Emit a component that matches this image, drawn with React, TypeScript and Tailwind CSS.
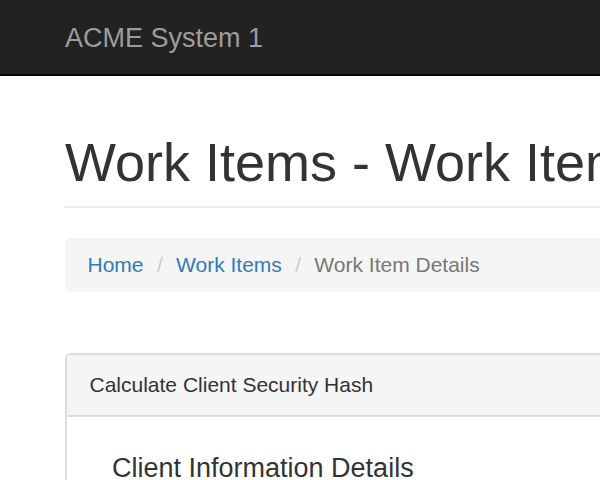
export default function App() {
  return (
    <div className="w-[600px] h-[480px] overflow-hidden bg-white font-['Liberation_Sans',Arial,sans-serif] text-[#333333]">
      <nav className="h-[76px] bg-[#222222] border-b-2 border-[#080808]">
        <div className="pl-[65px] pt-[22.5px]">
          <a href="#" className="text-[27px] leading-[30px] text-[#9d9d9d] whitespace-nowrap">
            ACME System 1
          </a>
        </div>
      </nav>

      <div className="w-[1100px] pl-[65px]">
        <div className="mt-[57px] pb-[13.5px] border-b-2 border-[#eeeeee]">
          <h1 className="text-[54px] leading-[59.4px] font-normal whitespace-nowrap">
            Work Items - Work Item Details
          </h1>
        </div>

        <ol className="mt-[30px] py-[12px] px-[22.5px] bg-[#f5f5f5] rounded-[6px] text-[21px] leading-[30px] whitespace-nowrap">
          <li className="inline-block">
            <a href="#" className="text-[#337ab7]">Home</a>
          </li>{" "}
          <li className="inline-block">
            <span className="px-[7.5px] text-[#cccccc]">/&nbsp;</span>
            <a href="#" className="text-[#337ab7]">Work Items</a>
          </li>{" "}
          <li className="inline-block text-[#777777]">
            <span className="px-[7.5px] text-[#cccccc]">/&nbsp;</span>
            Work Item Details
          </li>
        </ol>

        <div className="mt-[61px] border-2 border-[#dddddd] rounded-[6px]">
          <div className="bg-[#f5f5f5] border-b-2 border-[#dddddd] rounded-t-[4px] py-[15px] px-[22.5px]">
            <h3 className="text-[21px] leading-[30px] font-normal">Calculate Client Security Hash</h3>
          </div>
          <div className="p-[22.5px]">
            <div className="pl-[22.5px]">
              <h4 className="mt-[15px] text-[27px] leading-[29.7px] font-normal">Client Information Details</h4>
              <div className="h-[200px]" />
            </div>
          </div>
        </div>
      </div>
    </div>
  );
}
